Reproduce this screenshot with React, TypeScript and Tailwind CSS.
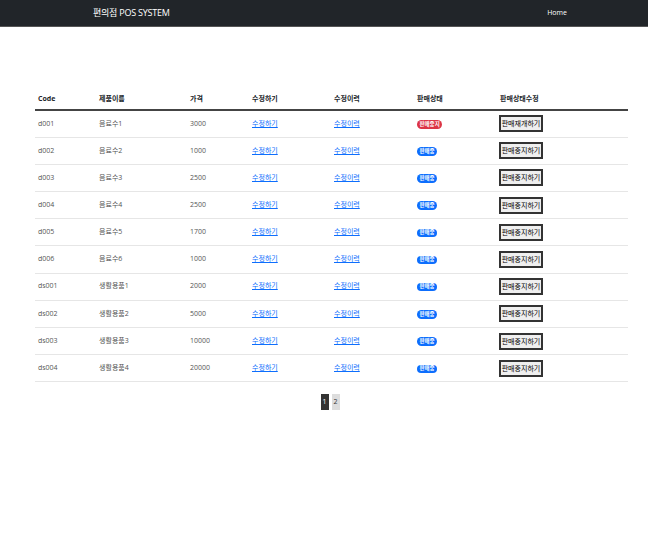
import React from 'react';

type Product = {
  code: string;
  name: string;
  price: number;
  onSale: boolean;
};

const products: Product[] = [
  { code: 'd001', name: '음료수1', price: 3000, onSale: false },
  { code: 'd002', name: '음료수2', price: 1000, onSale: true },
  { code: 'd003', name: '음료수3', price: 2500, onSale: true },
  { code: 'd004', name: '음료수4', price: 2500, onSale: true },
  { code: 'd005', name: '음료수5', price: 1700, onSale: true },
  { code: 'd006', name: '음료수6', price: 1000, onSale: true },
  { code: 'ds001', name: '생활용품1', price: 2000, onSale: true },
  { code: 'ds002', name: '생활용품2', price: 5000, onSale: true },
  { code: 'ds003', name: '생활용품3', price: 10000, onSale: true },
  { code: 'ds004', name: '생활용품4', price: 20000, onSale: true },
];

const font = { fontFamily: '"Open Sans", "Noto Sans CJK KR", sans-serif' };

export default function App() {
  return (
    <div className="min-h-[540px] w-[648px] bg-white text-[#212529]" style={font}>
      {/* Navbar */}
      <nav className="flex h-[27px] items-center bg-[#212529] border-b border-[#555]">
        <span className="ml-[93px] text-[9px] text-white tracking-tight">편의점 POS SYSTEM</span>
        <span className="ml-auto mr-[81px] text-[7px] text-white">Home</span>
      </nav>

      {/* Table */}
      <div className="mx-[35px] mt-[63px] w-[593px]">
        <table className="w-full table-fixed border-collapse text-[7px]">
          <colgroup>
            <col className="w-[61px]" />
            <col className="w-[91px]" />
            <col className="w-[62px]" />
            <col className="w-[82px]" />
            <col className="w-[83px]" />
            <col className="w-[83px]" />
            <col />
          </colgroup>
          <thead>
            <tr className="h-[20px] border-b-2 border-[#444] text-left font-bold">
              <th className="pl-[3px] font-bold">Code</th>
              <th className="pl-[3px] font-bold">제품이름</th>
              <th className="pl-[3px] font-bold">가격</th>
              <th className="pl-[3px] font-bold">수정하기</th>
              <th className="pl-[3px] font-bold">수정이력</th>
              <th className="pl-[3px] font-bold">판매상태</th>
              <th className="pl-[3px] font-bold">판매상태수정</th>
            </tr>
          </thead>
          <tbody>
            {products.map((p) => (
              <tr key={p.code} className="h-[27.2px] border-b border-[#e6e6e6] text-[#555]">
                <td className="pl-[3px]">{p.code}</td>
                <td className="pl-[3px]">{p.name}</td>
                <td className="pl-[3px]">{p.price}</td>
                <td className="pl-[3px]">
                  <a className="text-[#0d6efd] underline">수정하기</a>
                </td>
                <td className="pl-[3px]">
                  <a className="text-[#0d6efd] underline">수정이력</a>
                </td>
                <td className="pl-[3px]">
                  {p.onSale ? (
                    <span className="inline-block rounded-full bg-[#0d6efd] px-[2.5px] py-[1.5px] text-[5.5px] font-bold leading-none text-white">
                      판매중
                    </span>
                  ) : (
                    <span className="inline-block rounded-full bg-[#dc3545] px-[2.5px] py-[1.5px] text-[5.5px] font-bold leading-none text-white">
                      판매중지
                    </span>
                  )}
                </td>
                <td className="pl-[2px]">
                  <button className="h-[17px] w-[44px] border-2 border-[#333] bg-[#efefef] text-[7px] leading-none text-black">
                    {p.onSale ? '판매중지하기' : '판매재개하기'}
                  </button>
                </td>
              </tr>
            ))}
          </tbody>
        </table>

        {/* Pagination */}
        <div className="mt-[12px] flex justify-center gap-[3px] pr-[3px]">
          <span className="flex h-[16px] w-[8px] items-center justify-center bg-[#333] text-[7px] text-white">1</span>
          <span className="flex h-[16px] w-[8px] items-center justify-center bg-[#ddd] text-[7px] text-[#333]">2</span>
        </div>
      </div>
    </div>
  );
}
